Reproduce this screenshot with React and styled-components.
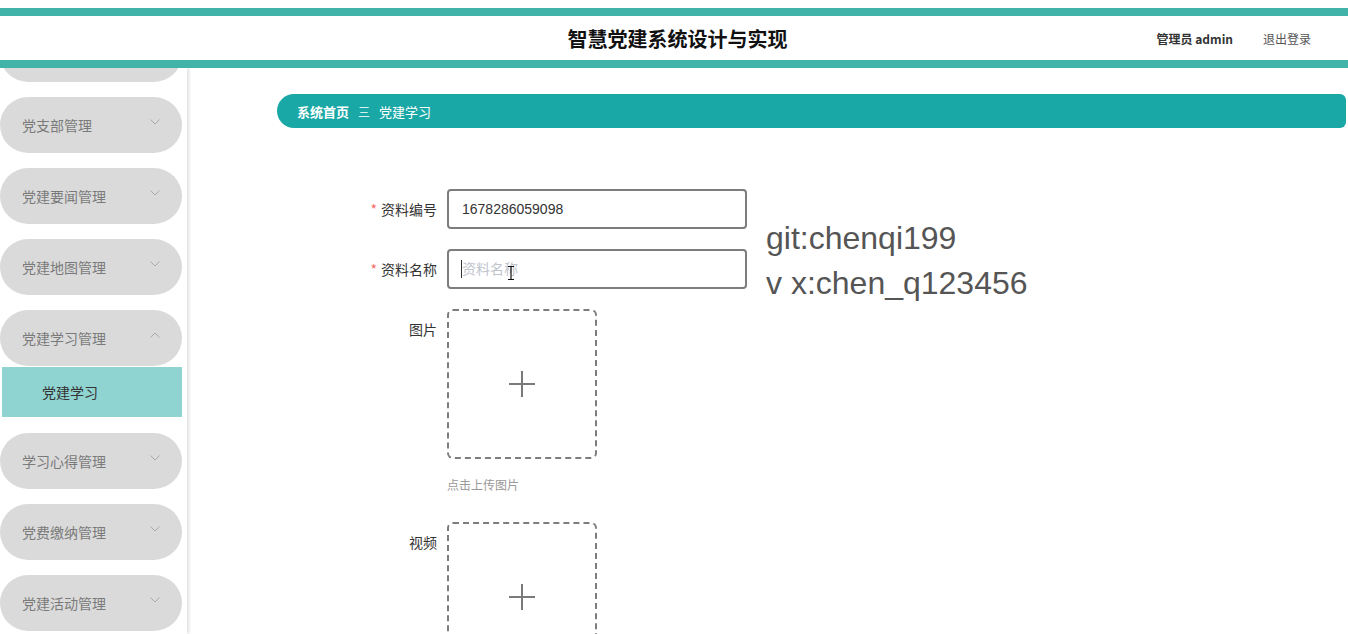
import React from "react";
import styled, { createGlobalStyle } from "styled-components";

const GlobalStyle = createGlobalStyle`
  html, body, #root {
    margin: 0;
    padding: 0;
    height: 100%;
  }
  body {
    font-family: "Noto Sans", "Noto Sans CJK SC", sans-serif;
    background: #fff;
    overflow: hidden;
  }
`;

const Page = styled.div`
  height: 634px;
  display: flex;
  flex-direction: column;
  position: relative;
`;

const Header = styled.header`
  margin-top: 8px;
  height: 44px;
  border-top: 8px solid #41b3a9;
  border-bottom: 8px solid #41b3a9;
  background: #fff;
  display: flex;
  align-items: center;
  justify-content: center;
  padding-left: 7px;
  position: relative;
  flex-shrink: 0;
  z-index: 2;
`;

const Title = styled.h1`
  margin: 0;
  font-size: 20px;
  font-weight: bold;
  color: #111;
  font-family: "Noto Sans CJK SC", sans-serif;
`;

const UserArea = styled.div`
  position: absolute;
  right: 37px;
  top: 0;
  bottom: 0;
  display: flex;
  align-items: center;
  gap: 30px;
  font-size: 12px;
  font-family: "Noto Sans CJK SC", sans-serif;
`;

const UserName = styled.span`
  font-weight: bold;
  color: #333;
`;

const Logout = styled.span`
  color: #555;
`;

const Body = styled.div`
  flex: 1;
  display: flex;
  min-height: 0;
`;

const Sidebar = styled.aside`
  width: 187px;
  flex-shrink: 0;
  overflow: hidden;
  background: #fff;
  box-shadow: 2px 0 3px rgba(0, 0, 0, 0.12);
  z-index: 1;
`;

const MenuList = styled.div`
  margin-top: -42px;
  display: flex;
  flex-direction: column;
  gap: 15px;
`;

const Group = styled.div`
  display: flex;
  flex-direction: column;
  gap: 1px;
  margin-bottom: 1px;
`;

const MenuItem = styled.div`
  width: 182px;
  height: 56px;
  box-sizing: border-box;
  border-radius: 28px;
  background: #dadada;
  display: flex;
  align-items: center;
  justify-content: space-between;
  padding: 0 22px;
  font-size: 14px;
  color: #7a7a7a;
  font-family: "Noto Sans CJK SC", sans-serif;
`;

const SubItem = styled.div`
  margin-left: 2px;
  width: 180px;
  height: 50px;
  box-sizing: border-box;
  background: #8fd4d1;
  display: flex;
  align-items: center;
  padding-left: 40px;
  font-size: 14px;
  color: #333;
  font-family: "Noto Sans CJK SC", sans-serif;
`;

const ChevronIcon = styled.svg`
  margin-top: -6px;
`;

const Chevron = ({ up }) => (
  <ChevronIcon width="10" height="6" viewBox="0 0 10 6">
    <path
      d={up ? "M0.5 5.5 L5 1 L9.5 5.5" : "M0.5 0.5 L5 5 L9.5 0.5"}
      fill="none"
      stroke="#a8a8a8"
      strokeWidth="1"
    />
  </ChevronIcon>
);

const Main = styled.main`
  flex: 1;
  padding: 26px 2px 0 90px;
  position: relative;
  overflow: hidden;
`;

const Crumbs = styled.div`
  height: 34px;
  background: #1aa8a6;
  border-radius: 17px 6px 6px 17px;
  display: flex;
  align-items: center;
  padding-left: 20px;
  gap: 9px;
  font-size: 13px;
  color: #fff;
  font-family: "Noto Sans CJK SC", sans-serif;
`;

const CrumbHome = styled.span`
  font-weight: bold;
`;

const CrumbSep = styled.span`
  font-size: 12px;
  color: #d8f0ef;
`;

const Form = styled.form`
  margin-top: 61px;
  display: flex;
  flex-direction: column;
  gap: 20px;
`;

const Row = styled.div`
  display: flex;
  align-items: flex-start;
`;

const Label = styled.label`
  width: 160px;
  padding-right: 10px;
  text-align: right;
  line-height: 40px;
  font-size: 14px;
  color: #333;
  font-family: "Noto Sans CJK SC", sans-serif;
  flex-shrink: 0;
`;

const Star = styled.span`
  color: #f56c6c;
  margin-right: 4px;
`;

const InputWrap = styled.div`
  position: relative;
`;

const Input = styled.input`
  width: 300px;
  height: 40px;
  box-sizing: border-box;
  border: 2px solid #7d7d7d;
  border-radius: 4px;
  padding: 0 13px;
  font-size: 14px;
  color: #333;
  font-family: "Liberation Sans", "Noto Sans CJK SC", sans-serif;
  outline: none;
  &::placeholder {
    color: #c0c4cc;
    font-family: "Noto Sans CJK SC", sans-serif;
  }
`;

const Caret = styled.span`
  position: absolute;
  left: 14px;
  top: 11px;
  width: 1px;
  height: 18px;
  background: #333;
`;

const Cursor = styled.svg`
  position: absolute;
  left: 60px;
  top: 17px;
`;

const UploadCol = styled.div`
  display: flex;
  flex-direction: column;
`;

const UploadBox = styled.div`
  width: 150px;
  height: 150px;
  box-sizing: border-box;
  border: 2px dashed #7d7d7d;
  border-radius: 6px;
  display: flex;
  align-items: center;
  justify-content: center;
`;

const Hint = styled.div`
  margin: 17px 0 9px;
  font-size: 12px;
  line-height: 17px;
  color: #999;
  font-family: "Noto Sans CJK SC", sans-serif;
`;

const Plus = () => (
  <svg width="28" height="28" viewBox="0 0 28 28">
    <path d="M14 1 V27 M1 14 H27" stroke="#7a7a7a" strokeWidth="2" fill="none" />
  </svg>
);

const Watermark = styled.div`
  position: absolute;
  left: 766px;
  top: 216px;
  font-family: "Liberation Sans", sans-serif;
  font-size: 32px;
  line-height: 45px;
  color: #555;
  pointer-events: none;
`;

const menus = ["党支部管理", "党建要闻管理", "党建地图管理"];
const menusAfter = ["学习心得管理", "党费缴纳管理", "党建活动管理"];

export default function App() {
  return (
    <>
      <GlobalStyle />
      <Page>
        <Header>
          <Title>智慧党建系统设计与实现</Title>
          <UserArea>
            <UserName>管理员 admin</UserName>
            <Logout>退出登录</Logout>
          </UserArea>
        </Header>
        <Body>
          <Sidebar>
            <MenuList>
              <MenuItem />
              {menus.map((m) => (
                <MenuItem key={m}>
                  <span>{m}</span>
                  <Chevron />
                </MenuItem>
              ))}
              <Group>
                <MenuItem>
                  <span>党建学习管理</span>
                  <Chevron up />
                </MenuItem>
                <SubItem>党建学习</SubItem>
              </Group>
              {menusAfter.map((m) => (
                <MenuItem key={m}>
                  <span>{m}</span>
                  <Chevron />
                </MenuItem>
              ))}
            </MenuList>
          </Sidebar>
          <Main>
            <Crumbs>
              <CrumbHome>系统首页</CrumbHome>
              <CrumbSep>三</CrumbSep>
              <span>党建学习</span>
            </Crumbs>
            <Form>
              <Row>
                <Label>
                  <Star>*</Star>资料编号
                </Label>
                <Input defaultValue="1678286059098" />
              </Row>
              <Row>
                <Label>
                  <Star>*</Star>资料名称
                </Label>
                <InputWrap>
                  <Input placeholder="资料名称" />
                  <Caret />
                  <Cursor width="8" height="14" viewBox="0 0 8 14">
                    <path d="M1 0.5 H7 M4 0.5 V13.5 M1 13.5 H7" stroke="#111" strokeWidth="1.2" fill="none" />
                  </Cursor>
                </InputWrap>
              </Row>
              <Row>
                <Label>图片</Label>
                <UploadCol>
                  <UploadBox>
                    <Plus />
                  </UploadBox>
                  <Hint>点击上传图片</Hint>
                </UploadCol>
              </Row>
              <Row>
                <Label>视频</Label>
                <UploadCol>
                  <UploadBox>
                    <Plus />
                  </UploadBox>
                </UploadCol>
              </Row>
            </Form>
          </Main>
        </Body>
        <Watermark>
          git:chenqi199
          <br />v x:chen_q123456
        </Watermark>
      </Page>
    </>
  );
}
